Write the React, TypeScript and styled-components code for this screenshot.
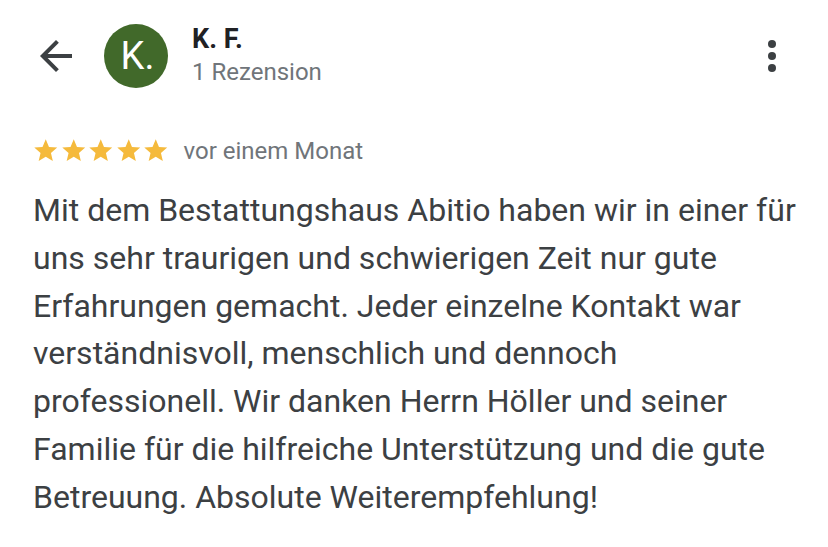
import React from 'react';
import styled, { createGlobalStyle } from 'styled-components';

const GlobalStyle = createGlobalStyle`
    html, body {
        margin: 0;
        padding: 0;
        background: #ffffff;
    }
    body {
        font-family: Roboto, 'Noto Sans', Arial, sans-serif;
        -webkit-font-smoothing: antialiased;
    }
`;

const Page = styled.div`
    width: 828px;
    height: 547px;
    box-sizing: border-box;
    padding: 24px 32px 0 32px;
    overflow: hidden;
`;

const Header = styled.div`
    display: flex;
    align-items: center;
    height: 64px;
`;

const IconButton = styled.div`
    width: 48px;
    height: 48px;
    display: flex;
    align-items: center;
    justify-content: center;
    color: #3c4043;
    flex-shrink: 0;
`;

const Avatar = styled.div`
    width: 64px;
    height: 64px;
    border-radius: 50%;
    background: #41692a;
    color: #ffffff;
    display: flex;
    align-items: center;
    justify-content: center;
    font-size: 38px;
    margin-left: 24px;
    flex-shrink: 0;
    padding-left: 3px;
    box-sizing: border-box;
`;

const Author = styled.div`
    display: flex;
    flex-direction: column;
    margin-left: 24px;
    flex: 1;
    margin-top: -1px;
`;

const Name = styled.div`
    font-size: 27px;
    font-weight: 700;
    color: #202124;
    line-height: 32px;
`;

const Meta = styled.div`
    font-size: 24px;
    color: #70757a;
    line-height: 34px;
`;

const RatingRow = styled.div`
    display: flex;
    align-items: center;
    margin-top: 49px;
    height: 28px;
`;

const Stars = styled.div`
    display: flex;
    color: #f5ba3c;
`;

const When = styled.span`
    font-size: 24px;
    color: #70757a;
    margin-left: 14px;
`;

const Body = styled.p`
    margin: 22px 0 0 1px;
    font-size: 32px;
    line-height: 47.8px;
    color: #3c4043;
`;

const Star = () => (
    <svg width="27.5" height="27.5" viewBox="0 0 24 24" fill="currentColor">
        <path d="M12 17.27L18.18 21l-1.64-7.03L22 9.24l-7.19-.61L12 2 9.19 8.63 2 9.24l5.46 4.73L5.82 21z" />
    </svg>
);

export default function App() {
    return (
        <>
            <GlobalStyle />
            <Page>
                <Header>
                    <IconButton aria-label="Zurück">
                        <svg width="48" height="48" viewBox="0 0 24 24" fill="currentColor">
                            <path d="M20 11H7.83l5.59-5.59L12 4l-8 8 8 8 1.41-1.41L7.83 13H20v-2z" />
                        </svg>
                    </IconButton>
                    <Avatar>K.</Avatar>
                    <Author>
                        <Name>K. F.</Name>
                        <Meta>1 Rezension</Meta>
                    </Author>
                    <IconButton aria-label="Mehr">
                        <svg width="48" height="48" viewBox="0 0 24 24" fill="currentColor">
                            <circle cx="12" cy="6" r="2" />
                            <circle cx="12" cy="12" r="2" />
                            <circle cx="12" cy="18" r="2" />
                        </svg>
                    </IconButton>
                </Header>

                <RatingRow>
                    <Stars>
                        {[0, 1, 2, 3, 4].map((i) => (
                            <Star key={i} />
                        ))}
                    </Stars>
                    <When>vor einem Monat</When>
                </RatingRow>

                <Body>
                    Mit dem Bestattungshaus Abitio haben wir in einer für uns sehr traurigen und
                    schwierigen Zeit nur gute Erfahrungen gemacht. Jeder einzelne Kontakt war
                    verständnisvoll, menschlich und dennoch professionell. Wir danken Herrn Höller
                    und seiner Familie für die hilfreiche Unterstützung und die gute Betreuung.
                    Absolute Weiterempfehlung!
                </Body>
            </Page>
        </>
    );
}
